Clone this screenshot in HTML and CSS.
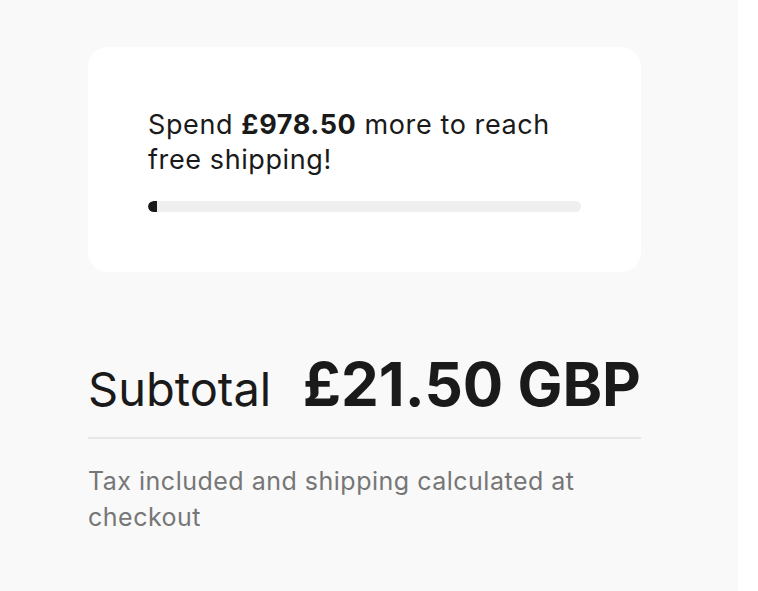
FILE: index.html
```html
<!DOCTYPE html>
<html lang="en">

<head>
    <meta charset="UTF-8">
    <meta name="viewport" content="width=device-width, initial-scale=1.0">
    <title>Cart summary</title>
    <link rel="stylesheet" href="styles.css">
</head>

<body>
    <div class="panel">
        <div class="summary">
            <div class="shipping-card">
                <p class="shipping-text">Spend <strong>£978.50</strong> more to reach free shipping!</p>
                <div class="progress">
                    <div class="progress-fill" style="width: 2%;"></div>
                </div>
            </div>
            <div class="subtotal">
                <span class="subtotal-label">Subtotal</span>
                <span class="subtotal-price">£21.50 GBP</span>
            </div>
            <p class="tax-note">Tax included and shipping calculated at checkout</p>
        </div>
    </div>
</body>

</html>
```

FILE: styles.css
```css
* {
    margin: 0;
    padding: 0;
    box-sizing: border-box;
}

body {
    background-color: #fff;
    font-family: Inter, "Noto Sans", sans-serif;
    color: #1a1a1a;
}

.panel {
    width: 738px;
    height: 100vh;
    background-color: #f9f9f9;
    padding: 47px 0 0 88px;
}

.summary {
    width: 553px;
}

.shipping-card {
    background-color: #fff;
    border-radius: 20px;
    padding: 60px;
    height: 225px;
}

.shipping-text {
    font-size: 27px;
    line-height: 35px;
    letter-spacing: 0.6px;
}

.shipping-text strong {
    font-weight: 700;
}

.progress {
    margin-top: 24px;
    height: 11px;
    border-radius: 6px;
    background-color: #efefef;
    overflow: hidden;
}

.progress-fill {
    height: 100%;
    background-color: #1a1a1a;
    border-radius: 6px 0 0 6px;
}

.subtotal {
    display: flex;
    justify-content: space-between;
    align-items: baseline;
    margin-top: 77px;
    padding-bottom: 18px;
    border-bottom: 2px solid #e8e8e8;
}

.subtotal-label {
    font-size: 47px;
    line-height: 60px;
}

.subtotal-price {
    font-size: 60px;
    font-weight: 700;
    line-height: 70px;
}

.tax-note {
    margin-top: 24px;
    font-size: 25px;
    line-height: 36px;
    letter-spacing: 0.5px;
    color: #767676;
}
```
